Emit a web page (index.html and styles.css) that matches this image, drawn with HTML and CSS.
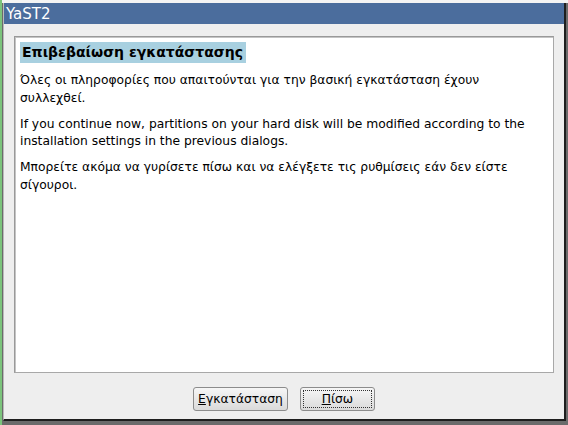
FILE: index.html
```html
<!doctype html>
<html lang="el">
<head>
    <meta charset="utf-8">
    <title>YaST2</title>
    <link rel="stylesheet" href="styles.css">
</head>
<body>

<div class="desk">
    <div class="window">
        <div class="titlebar">YaST2</div>

        <div class="client">
            <div class="richtext">
                <h1 class="heading"><span class="heading-mark">Επιβεβαίωση εγκατάστασης</span></h1>
                <p>Όλες οι πληροφορίες που απαιτούνται για την βασική εγκατάσταση έχουν συλλεχθεί.</p>
                <p>If you continue now, partitions on your hard disk will be modified according to the installation settings in the previous dialogs.</p>
                <p>Μπορείτε ακόμα να γυρίσετε πίσω και να ελέγξετε τις ρυθμίσεις εάν δεν είστε σίγουροι.</p>
            </div>

            <div class="buttons">
                <button class="button"><span class="mnemonic">Ε</span>γκατάσταση</button>
                <button class="button button_focus"><span class="focus-ring"><span class="mnemonic">Π</span>ίσω</span></button>
            </div>
        </div>
    </div>
</div>

</body>
</html>
```

FILE: styles.css
```css
html, body {
    margin: 0;
    padding: 0;
    background: #e4e4e4;
    font-family: "DejaVu Sans", Verdana, sans-serif;
    color: #000;
    overflow: hidden;
}

.desk {
    width: 568px;
    height: 425px;
    padding: 3px 0 0 3px;
    box-sizing: border-box;
    border-left: 2px solid #7cc47c;
    background: linear-gradient(#f4f4f4, #f4f4f4) no-repeat 0 0 / 100% 3px, #6b6b6b;
}

.window {
    width: 560px;
    height: 416px;
    margin-left: -2px;
    background: #eeeeee;
    border-left: 1px solid #bbb;
    border-right: 2px solid #1e1e1e;
    border-bottom: 2px solid #1e1e1e;
    display: flex;
    flex-direction: column;
}

.titlebar {
    height: 21px;
    background: #4b6d9d;
    color: #fff;
    font-size: 15px;
    line-height: 22px;
    padding-left: 2px;
}

.client {
    flex: 1;
    display: flex;
    flex-direction: column;
    padding: 12px 10px 0 10px;
}

.richtext {
    height: 337px;
    box-sizing: border-box;
    background: #fff;
    border: 1px solid #999;
    border-right-color: #a8a8a8;
    border-bottom-color: #a8a8a8;
    box-shadow: inset 1px 1px 0 #c4c4c4;
    padding: 5px 5px;
    font-size: 12.3px;
    line-height: 17.5px;
}

.heading {
    margin: 0 0 9px;
    font-size: 14px;
    line-height: 21px;
    font-weight: bold;
}
    .heading-mark {
        display: inline-block;
        background: #a8d0e0;
        padding: 0 3px 0 2px;
    }

.richtext p {
    margin: 0 0 8.5px;
}

.buttons {
    display: flex;
    justify-content: center;
    gap: 12px;
    padding-top: 14px;
}

.button {
    height: 24px;
    padding: 0 4px;
    font-family: inherit;
    font-size: 12.3px;
    color: #000;
    border: 1px solid #8c8c8c;
    border-radius: 3px;
    background: linear-gradient(#f6f6f6, #dadada);
}
    .button_focus {
        width: 75px;
        padding: 2px;
    }
    .focus-ring {
        display: flex;
        align-items: center;
        justify-content: center;
        height: 100%;
        border: 1px dotted #333;
        box-sizing: border-box;
    }

.mnemonic {
    text-decoration: underline;
}
```
